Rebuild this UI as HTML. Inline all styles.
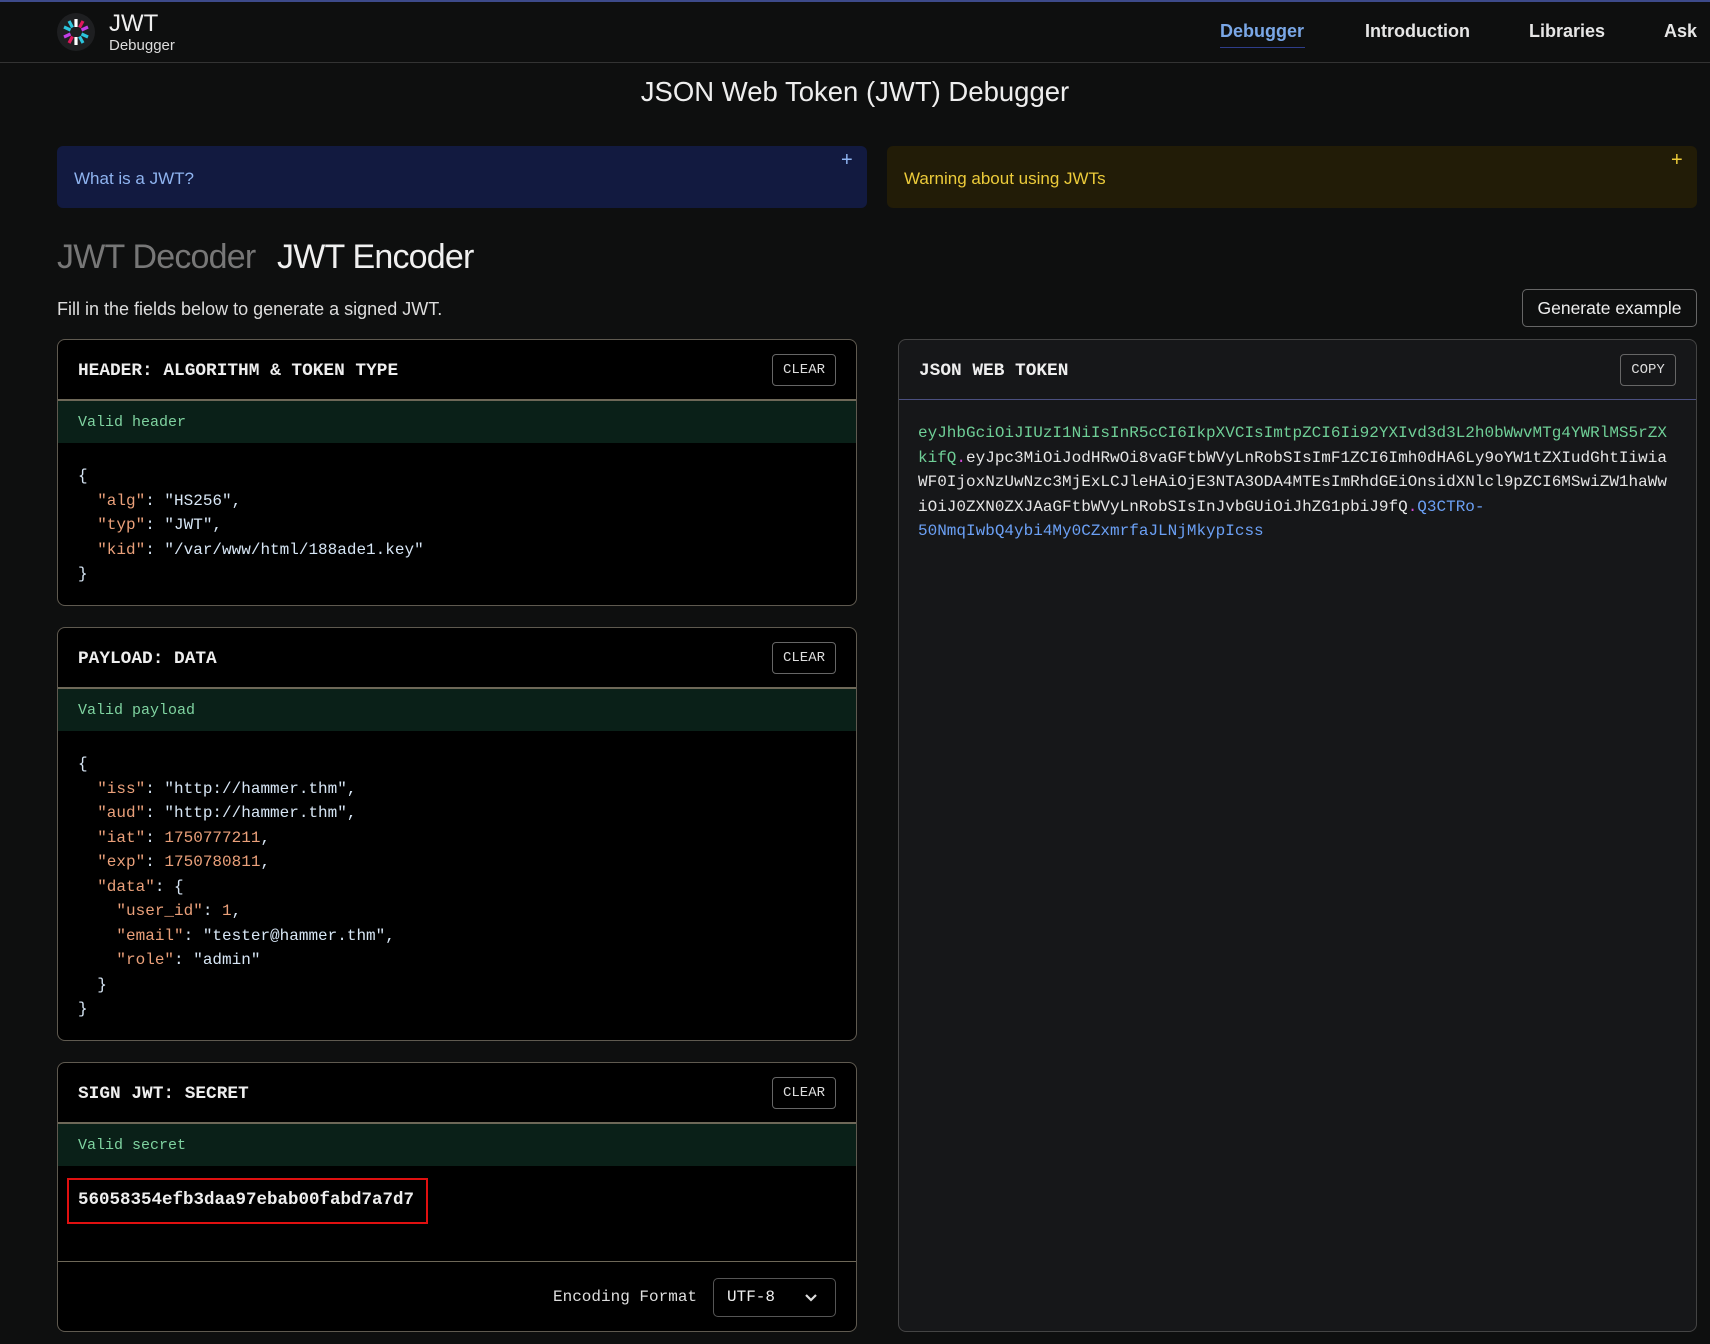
<!DOCTYPE html>
<html><head><meta charset="utf-8"><style>
*{box-sizing:border-box;margin:0;padding:0}
body{width:1710px;height:1344px;background:#0e0f0f;font-family:"Liberation Sans",sans-serif;color:#e8e8e8;position:relative;overflow:hidden}
.abs{position:absolute}
.mono{font-family:"Liberation Mono",monospace}
.topline{left:0;top:0;width:1710px;height:2px;background:#3d4a8a}
.hdr{left:0;top:0;width:1710px;height:63px;border-bottom:1px solid #333}
.nav{top:21px;font-size:18px;font-weight:bold;color:#e6e6e6}
.box{border-radius:6px;height:62px;top:146px}
.panel{background:#000;border:1px solid #5f5a50;border-radius:8px;left:57px;width:800px}
.ptitle{position:absolute;left:20px;font-family:"Liberation Mono",monospace;font-weight:bold;font-size:17.8px;color:#eee}
.clear{position:absolute;right:20px;width:64px;height:32px;border:1px solid #666;border-radius:4px;font-family:"Liberation Mono",monospace;font-size:14px;color:#ddd;text-align:center;line-height:30px}
.sep{position:absolute;left:0;right:0;height:2px;background:#6e6858}
.valid{position:absolute;left:0;right:0;height:42px;background:#0a2018;color:#7fd3a0;font-family:"Liberation Mono",monospace;font-size:15px;padding-left:20px;line-height:44px}
.code{position:absolute;left:20px;font-family:"Liberation Mono",monospace;font-size:16px;line-height:24.5px;color:#d7e6f5;white-space:pre}
.k{color:#eaa07a}.n{color:#eaa07a}
</style></head><body>
<div class="abs hdr"></div>
<div class="abs topline"></div>
<svg class="abs" style="left:57px;top:13px" width="38" height="38" viewBox="0 0 38 38">
<circle cx="19" cy="19" r="19" fill="#1e1f21"/>
<g stroke-width="3.2" stroke-linecap="butt">
<line x1="19" y1="6" x2="19" y2="14" stroke="#fff"/>
<line x1="19" y1="24" x2="19" y2="32" stroke="#fff"/>
<line x1="26" y1="8" x2="22.5" y2="14.5" stroke="#e0175c"/>
<line x1="12" y1="30" x2="15.5" y2="23.5" stroke="#e0175c"/>
<line x1="31" y1="14" x2="24.5" y2="17" stroke="#c23ee6"/>
<line x1="7" y1="24" x2="13.5" y2="21" stroke="#c23ee6"/>
<line x1="31" y1="24" x2="24.5" y2="21" stroke="#2bc4dc"/>
<line x1="7" y1="14" x2="13.5" y2="17" stroke="#2bc4dc"/>
<line x1="26" y1="30" x2="22.5" y2="23.5" stroke="#2bc4dc"/>
<line x1="12" y1="8" x2="15.5" y2="14.5" stroke="#2bc4dc"/>
</g></svg>
<div class="abs" style="left:109px;top:10px;font-size:24px;color:#eee">JWT</div>
<div class="abs" style="left:109px;top:37px;font-size:15px;color:#ddd">Debugger</div>
<div class="abs nav" style="left:1220px;color:#7aa7e6">Debugger</div>
<div class="abs" style="left:1220px;top:47px;width:85px;height:1px;background:#2e3d8a"></div>
<div class="abs nav" style="left:1365px">Introduction</div>
<div class="abs nav" style="left:1529px">Libraries</div>
<div class="abs nav" style="left:1664px">Ask</div>
<div class="abs" style="left:0;width:1710px;top:76px;text-align:center;font-size:27.5px;color:#eee">JSON Web Token (JWT) Debugger</div>

<div class="abs box" style="left:57px;width:810px;background:#121a40"></div>
<div class="abs" style="left:74px;top:169px;font-size:17px;color:#8fb4f0">What is a JWT?</div>
<div class="abs" style="left:841px;top:149px;font-size:20px;color:#8fb4f0">+</div>
<div class="abs box" style="left:887px;width:810px;background:#221c07"></div>
<div class="abs" style="left:904px;top:169px;font-size:17px;color:#eccb3a">Warning about using JWTs</div>
<div class="abs" style="left:1671px;top:149px;font-size:20px;color:#eccb3a">+</div>

<div class="abs" style="left:57px;top:238px;font-size:34px;color:#777;letter-spacing:-0.8px">JWT Decoder</div>
<div class="abs" style="left:277px;top:238px;font-size:34px;color:#f0f0f0;letter-spacing:-0.8px">JWT Encoder</div>
<div class="abs" style="left:57px;top:299px;font-size:18px;color:#ddd">Fill in the fields below to generate a signed JWT.</div>
<div class="abs" style="left:1522px;top:289px;width:175px;height:38px;border:1px solid #666;border-radius:5px;font-size:17.5px;color:#eee;text-align:center;line-height:36px">Generate example</div>

<div class="abs panel" style="top:339px;height:267px">
<div class="ptitle" style="top:21px">HEADER: ALGORITHM &amp; TOKEN TYPE</div>
<div class="clear" style="top:14px">CLEAR</div>
<div class="sep" style="top:59px"></div>
<div class="valid" style="top:61px">Valid header</div>
<div class="code" style="top:124px">{
  <span class="k">"alg"</span>: "HS256",
  <span class="k">"typ"</span>: "JWT",
  <span class="k">"kid"</span>: "/var/www/html/188ade1.key"
}</div>
</div>

<div class="abs panel" style="top:627px;height:414px">
<div class="ptitle" style="top:21px">PAYLOAD: DATA</div>
<div class="clear" style="top:14px">CLEAR</div>
<div class="sep" style="top:59px"></div>
<div class="valid" style="top:61px">Valid payload</div>
<div class="code" style="top:124px">{
  <span class="k">"iss"</span>: "http://hammer.thm",
  <span class="k">"aud"</span>: "http://hammer.thm",
  <span class="k">"iat"</span>: <span class="n">1750777211</span>,
  <span class="k">"exp"</span>: <span class="n">1750780811</span>,
  <span class="k">"data"</span>: {
    <span class="k">"user_id"</span>: <span class="n">1</span>,
    <span class="k">"email"</span>: "tester@hammer.thm",
    <span class="k">"role"</span>: "admin"
  }
}</div>
</div>

<div class="abs panel" style="top:1062px;height:270px">
<div class="ptitle" style="top:21px">SIGN JWT: SECRET</div>
<div class="clear" style="top:14px">CLEAR</div>
<div class="sep" style="top:59px"></div>
<div class="valid" style="top:61px">Valid secret</div>
<div class="abs" style="left:9px;top:115px;width:361px;height:46px;border:2px solid #e01010"></div>
<div class="abs mono" style="left:20px;top:127px;font-size:17.5px;font-weight:bold;color:#eee">56058354efb3daa97ebab00fabd7a7d7</div>
<div class="abs" style="left:0;right:0;top:198px;height:1px;background:#6e6858"></div>
<div class="abs mono" style="left:495px;top:225px;font-size:16px;color:#ddd">Encoding Format</div>
<div class="abs" style="left:655px;top:215px;width:123px;height:39px;border:1px solid #555;border-radius:5px"></div>
<div class="abs mono" style="left:669px;top:225px;font-size:16px;color:#eee">UTF-8</div>
<svg class="abs" style="left:746px;top:230px" width="14" height="10" viewBox="0 0 14 10"><path d="M2 2 L7 7 L12 2" stroke="#ddd" stroke-width="2.2" fill="none"/></svg>
</div>

<div class="abs" style="left:898px;top:339px;width:799px;height:993px;background:#161719;border:1px solid #444;border-radius:8px">
<div class="ptitle" style="top:21px">JSON WEB TOKEN</div>
<div class="clear" style="top:14px;width:56px">COPY</div>
<div class="sep" style="top:59px;height:1px;background:#4b5080"></div>
<div class="abs mono" style="left:19px;top:81px;width:752px;font-size:16px;line-height:24.5px;color:#e6e6e6;word-break:break-all"><span style="color:#6fcf97">eyJhbGciOiJIUzI1NiIsInR5cCI6IkpXVCIsImtpZCI6Ii92YXIvd3d3L2h0bWwvMTg4YWRlMS5rZXkifQ</span><span style="color:#d04ad6">.</span>eyJpc3MiOiJodHRwOi8vaGFtbWVyLnRobSIsImF1ZCI6Imh0dHA6Ly9oYW1tZXIudGhtIiwiaWF0IjoxNzUwNzc3MjExLCJleHAiOjE3NTA3ODA4MTEsImRhdGEiOnsidXNlcl9pZCI6MSwiZW1haWwiOiJ0ZXN0ZXJAaGFtbWVyLnRobSIsInJvbGUiOiJhZG1pbiJ9fQ<span style="color:#d04ad6">.</span><span style="color:#6ba0f5">Q3CTRo-<br>50NmqIwbQ4ybi4My0CZxmrfaJLNjMkypIcss</span></div>
</div>
</body></html>
